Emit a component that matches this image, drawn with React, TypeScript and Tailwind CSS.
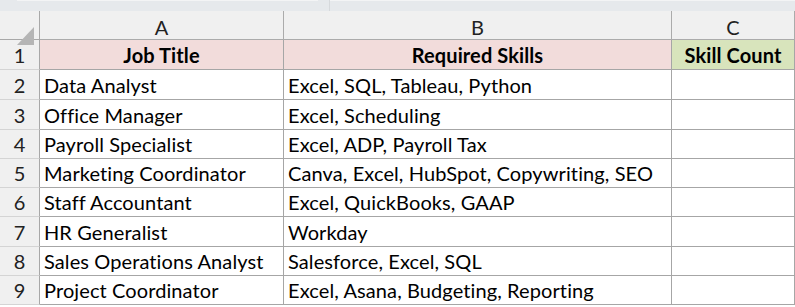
import React from "react";

const rows: [string, string][] = [
  ["Data Analyst", "Excel, SQL, Tableau, Python"],
  ["Office Manager", "Excel, Scheduling"],
  ["Payroll Specialist", "Excel, ADP, Payroll Tax"],
  ["Marketing Coordinator", "Canva, Excel, HubSpot, Copywriting, SEO"],
  ["Staff Accountant", "Excel, QuickBooks, GAAP"],
  ["HR Generalist", "Workday"],
  ["Sales Operations Analyst", "Salesforce, Excel, SQL"],
  ["Project Coordinator", "Excel, Asana, Budgeting, Reporting"],
];

const rowH = ["h-[30px]", "h-[30px]", "h-[29px]", "h-[29px]", "h-[29px]", "h-[30px]", "h-[29px]", "h-[29px]"];

export default function App() {
  return (
    <div className="w-[795px] h-[307px] bg-white overflow-hidden text-black font-['Lato','Open_Sans',sans-serif]">
      {/* top strip */}
      <div className="h-[11px] bg-[#e6e9ec] flex">
        <div className="w-[17px]" />
        <div className="w-[301px] h-px bg-[#f3f4f5]" />
        <div className="w-[12px] border-r border-[#d6d9dc]" />
        <div className="flex-1 h-px bg-[#f3f4f5]" />
      </div>

      <div className="grid grid-cols-[40px_244px_388px_123px] text-[20px] tracking-[0.1px] leading-none">
        {/* column headers */}
        <div className="h-[29px] bg-[#f0f0f0] border-r border-b border-[#a8a8a8] relative">
          <svg className="absolute left-[17px] top-[16px]" width="18" height="18" viewBox="0 0 18 18">
            <polygon points="0,18 17,0 17,18" fill="#b5b5b5" />
          </svg>
        </div>
        {["A", "B", "C"].map((l) => (
          <div
            key={l}
            className="h-[29px] bg-[#f0f0f0] border-r border-b border-[#ababab] flex items-center justify-center pt-[3px] text-[#222]"
          >
            {l}
          </div>
        ))}

        {/* row 1 */}
        <div className="h-[30px] bg-[#f0f0f0] border-r border-b border-r-[#a8a8a8] border-b-[#d4d4d4] flex items-center justify-center text-[#222]">
          1
        </div>
        <div className="h-[30px] bg-[#f2dcdb] border-r border-b border-[#a6a6a6] flex items-center justify-center font-bold">
          Job Title
        </div>
        <div className="h-[30px] bg-[#f2dcdb] border-r border-b border-[#a6a6a6] flex items-center justify-center font-bold">
          Required Skills
        </div>
        <div className="h-[30px] bg-[#d8e4bc] border-r border-b border-[#a6a6a6] flex items-center justify-center font-bold">
          Skill Count
        </div>

        {rows.map(([a, b], i) => (
          <React.Fragment key={a}>
            <div
              className={`${rowH[i]} bg-[#f0f0f0] border-r border-b border-r-[#a8a8a8] border-b-[#d4d4d4] flex items-center justify-center text-[#222]`}
            >
              {i + 2}
            </div>
            <div className={`${rowH[i]} border-r border-b border-[#a6a6a6] flex items-center pl-[4px] whitespace-nowrap`}>
              {a}
            </div>
            <div className={`${rowH[i]} border-r border-b border-[#a6a6a6] flex items-center pl-[4px] whitespace-nowrap`}>
              {b}
            </div>
            <div className={`${rowH[i]} border-r border-b border-[#a6a6a6]`} />
          </React.Fragment>
        ))}
      </div>
    </div>
  );
}
